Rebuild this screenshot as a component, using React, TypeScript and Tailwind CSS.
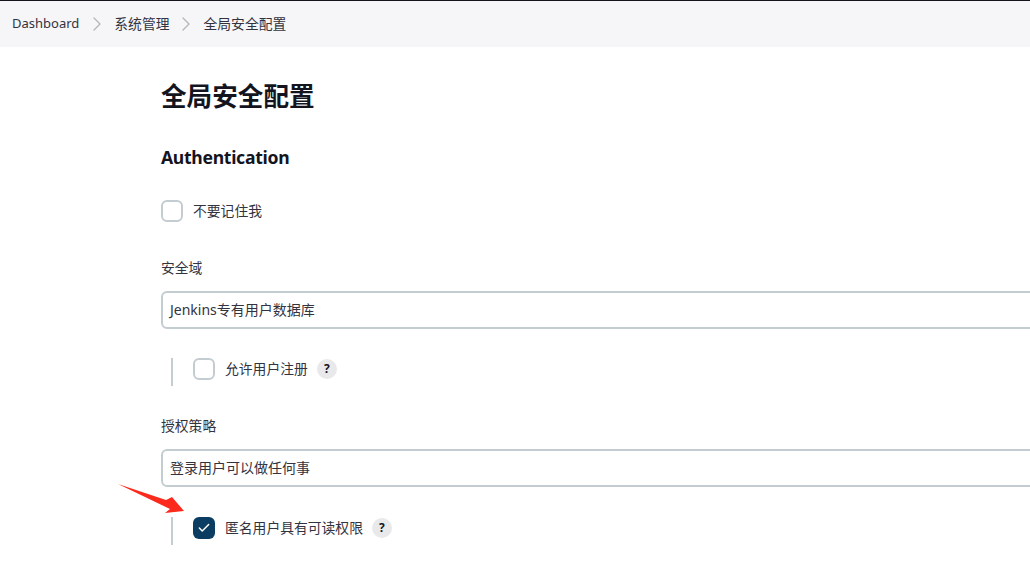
import React from 'react';
import { Check, ChevronRight } from 'lucide-react';

const fontStack = "font-['Noto_Sans','Noto_Sans_CJK_SC',sans-serif]";

function Checkbox({ checked = false }: { checked?: boolean }) {
  return (
    <span
      className={
        checked
          ? 'flex h-[22px] w-[22px] shrink-0 items-center justify-center rounded-[6px] bg-[#0b3d62]'
          : 'h-[22px] w-[22px] shrink-0 rounded-[6px] border-2 border-[#c3ccd1] bg-white'
      }
    >
      {checked && <Check className="h-[14px] w-[14px] text-white" strokeWidth={2.5} />}
    </span>
  );
}

function Help() {
  return (
    <span className="flex h-5 w-5 items-center justify-center rounded-full bg-[#e9e9eb] text-[12px] font-bold text-[#14141f]">
      ?
    </span>
  );
}

function Select({ value }: { value: string }) {
  return (
    <div className="mr-[-20px] flex h-[38px] items-center rounded-[6px] border-2 border-[#c3ccd1] bg-white pb-[2px] pl-[7px] text-[14px] text-[#333340]">
      {value}
    </div>
  );
}

function Nested({ label, checked }: { label: string; checked?: boolean }) {
  return (
    <div className="ml-[10px] h-[28px] border-l-2 border-[#c3ccd1] pl-[20px]">
      <div className="flex h-[22px] items-center">
        <Checkbox checked={checked} />
        <span className="ml-[10px] text-[13.8px] text-[#333340]">{label}</span>
        <span className="ml-[9px]">
          <Help />
        </span>
      </div>
    </div>
  );
}

export default function App() {
  return (
    <div className={`relative h-[572px] w-[1030px] overflow-hidden bg-white ${fontStack}`}>
      {/* Breadcrumb */}
      <nav className="flex h-[47px] items-center border-t border-[#14141f] bg-[#f6f6f8] pl-[12px] text-[13.8px] text-[#333340]">
        <span className="text-[13px]">Dashboard</span>
        <ChevronRight className="ml-[6px] mr-[5px] h-[24px] w-[24px] text-[#b4b4bc]" strokeWidth={1.25} />
        <span>系统管理</span>
        <ChevronRight className="ml-[4px] mr-[6px] h-[24px] w-[24px] text-[#b4b4bc]" strokeWidth={1.25} />
        <span>全局安全配置</span>
      </nav>

      <main className="pl-[161px]">
        <h1 className="mt-[32px] text-[25.6px] font-bold leading-[36px] text-[#14141f]">全局安全配置</h1>
        <h2 className="mt-[28px] text-[17.6px] font-bold leading-[28px] tracking-[-0.3px] text-[#14141f]">Authentication</h2>

        <div className="mt-[29px] flex items-center">
          <Checkbox />
          <span className="ml-[10px] text-[13.8px] text-[#333340]">不要记住我</span>
        </div>

        <div className="mt-[35px] text-[13.8px] leading-[22px] text-[#333340]">安全域</div>
        <div className="mt-[12px]">
          <Select value="Jenkins专有用户数据库" />
        </div>

        <div className="mt-[29px]">
          <Nested label="允许用户注册" />
        </div>

        <div className="mt-[29px] text-[13.8px] leading-[22px] text-[#333340]">授权策略</div>
        <div className="mt-[12px]">
          <Select value="登录用户可以做任何事" />
        </div>

        <div className="mt-[30px]">
          <Nested label="匿名用户具有可读权限" checked />
        </div>
      </main>

      {/* Annotation arrow */}
      <svg className="absolute left-[115px] top-[480px]" width="72" height="36" viewBox="0 0 72 36">
        <path d="M3 4 L51 20 L57 17 L69 31 L50 33 L55 29 Z" fill="#fb2a1c" />
      </svg>
    </div>
  );
}
